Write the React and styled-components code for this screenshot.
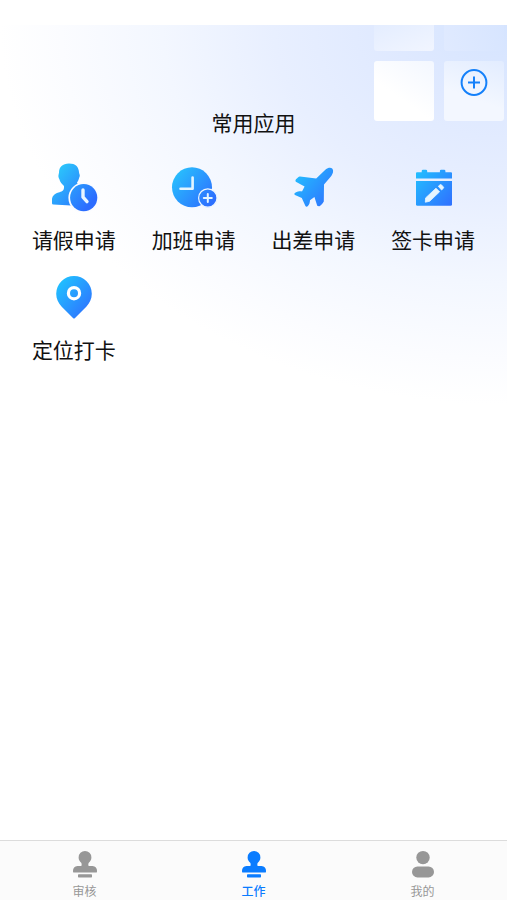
import React from "react";
import styled, { createGlobalStyle } from "styled-components";

const GlobalStyle = createGlobalStyle`
  *, *::before, *::after { box-sizing: border-box; }
  body {
    margin: 0;
    background: #fff;
    color: #111;
    font-family: "Noto Sans CJK SC", sans-serif;
  }
`;

const Page = styled.div`
  display: flex;
  flex-direction: column;
  min-height: 100vh;
  padding-top: 25px;
`;

const Main = styled.main`
  position: relative;
  flex: 1;
  padding: 80px 14px 24px;
  background: radial-gradient(
      ellipse 100% 380px at 100% 0,
      #d5e4ff 0%,
      #dfe9ff 22%,
      #e8efff 46%,
      #f3f7ff 68%,
      #fbfcff 88%,
      #ffffff 100%
    )
    no-repeat;
`;

const Tiles = styled.div`
  position: absolute;
  top: 0;
  right: 3px;
  display: grid;
  grid-template: 26px 60px / 60px 60px;
  gap: 10px;
`;

const tileFills = {
  soft: "linear-gradient(160deg, #e4edff, #f1f5ff)",
  faint: "linear-gradient(70deg, #e0eaff, #d7e5ff)",
  bright: "linear-gradient(215deg, #f3f7ff, #ffffff 60%)",
  pale: "linear-gradient(200deg, #e2ecff, #f3f7ff 60%)",
};

const Tile = styled.span`
  border-radius: ${(p) => (p.$cut ? "0 0 3px 3px" : "3px")};
  background: ${(p) => tileFills[p.$fill]};
`;

const AddButton = styled.button`
  position: absolute;
  top: 43px;
  right: 19px;
  width: 28px;
  height: 28px;
  padding: 0;
  border: 0;
  background: none;
  cursor: pointer;

  svg { display: block; }
`;

const Title = styled.h1`
  margin: 0 0 18px;
  font-size: 21px;
  font-weight: 400;
  line-height: 34px;
  text-align: center;
`;

const AppGrid = styled.nav`
  display: grid;
  grid-template-columns: repeat(4, 1fr);
`;

const AppLink = styled.a`
  display: flex;
  flex-direction: column;
  align-items: center;
  gap: 10px;
  height: 110px;
  padding-top: 5px;
  color: inherit;
  font-size: 21px;
  line-height: 34px;
  text-decoration: none;
  white-space: nowrap;
`;

const TabBar = styled.nav`
  display: grid;
  grid-template-columns: repeat(3, 1fr);
  height: 60px;
  border-top: 1px solid #dcdcdc;
  background: #fbfbfb;
`;

const TabLink = styled.a`
  display: flex;
  flex-direction: column;
  align-items: center;
  gap: 4px;
  padding-top: 9px;
  color: ${(p) => (p.$active ? "#0a7cff" : "#979797")};
  font-size: 12px;
  font-weight: ${(p) => (p.$active ? 500 : 400)};
  line-height: 18px;
  text-decoration: none;
`;

function AppIcon({ id, stops = ["#22c0ff", "#2f74ff"], children }) {
  return (
    <svg width="50" height="50" viewBox="0 0 50 50" aria-hidden="true">
      <defs>
        <linearGradient id={id} gradientUnits="userSpaceOnUse" x1="7" y1="10" x2="43" y2="40">
          <stop offset="0" stopColor={stops[0]} />
          <stop offset="1" stopColor={stops[1]} />
        </linearGradient>
      </defs>
      <g fill={`url(#${id})`}>{children}</g>
    </svg>
  );
}

const LeaveIcon = () => (
  <AppIcon id="leave" stops={["#2bc4fb", "#2c6cff"]}>
    <path d="M20 1.5C13.5 1.5 10 5 10 10.7C9.6 13.2 8.8 14 10.4 17.2C11 20 13 22 15 24V25.5C14.8 29 12.5 29.6 9.5 30.6C5 32 3 34.4 3 38V41.3Q3 42.5 4.3 42.5L22 43.5C25 40 31 24 28 20.5C29.7 18.5 30 16 30.8 14C30.9 12.5 30.2 11.5 30.1 10.7C29.7 4.5 26.5 1.5 20 1.5Z" />
    <circle cx="34.7" cy="35.7" r="15.3" fill="#fbfcff" />
    <circle cx="34.7" cy="35.7" r="13.6" />
    <path d="M34 28V35.2L38 39.6" fill="none" stroke="#e9f6ff" strokeWidth="3.4" strokeLinecap="round" strokeLinejoin="round" />
  </AppIcon>
);

const OvertimeIcon = () => (
  <AppIcon id="overtime" stops={["#28bffd", "#2d70ff"]}>
    <circle cx="23" cy="25.3" r="20" />
    <path d="M11.5 26.8H23.6V15.5" fill="none" stroke="#e3f5ff" strokeWidth="2.6" strokeLinecap="round" strokeLinejoin="round" />
    <circle cx="38.8" cy="36" r="9.2" stroke="#edf6ff" strokeWidth="1.2" />
    <path d="M38.8 32V40M34.8 36H42.8" fill="none" stroke="#e3f5ff" strokeWidth="2" strokeLinecap="round" />
  </AppIcon>
);

const TripIcon = () => (
  <AppIcon id="trip">
    <path d="M37.6 7.5C40 5.6 43 5.3 44.4 6.8C45.8 8.6 45 11.8 43.3 13.9L36 22.4L35.8 39.6C34.8 41.4 33.5 42.7 31.9 43.9C30.7 44.5 29.4 44.2 29 43L26.4 35L22 38.3C21.9 40.5 21.4 42.5 19.9 44.1C19 45 17.9 45 17.3 43.8L13.8 36L7 33C6.1 32.4 6.2 31.4 7.2 30.8C9.5 29.5 11.9 29.2 14 29.4L16.6 24.4L8.3 20C7.2 19.4 7.2 18.3 8 17.3L10.2 15.2Q11 14.5 12 14.6L28.2 16.4Z" />
  </AppIcon>
);

const CardIcon = () => (
  <AppIcon id="card">
    <path d="M9 10.3H13.7V9Q13.7 7.7 15 7.7H17.9Q19.2 7.7 19.2 9V10.3H31.9V9Q31.9 7.7 33.2 7.7H36.1Q37.4 7.7 37.4 9V10.3H43Q44 10.3 44 11.3V16.4H8V11.3Q8 10.3 9 10.3Z" />
    <path d="M8 19H44V42.4Q44 43.8 42.6 43.8H9.4Q8 43.8 8 42.4Z" />
    <path d="M28 26.2L31.6 29.8L21.6 39.3L17.3 40.2L17.6 35.9ZM30.3 24.3L32 22.8Q32.7 22.2 33.4 22.8L35.4 25Q36 25.7 35.4 26.3L33.6 28Z" fill="#e6f5ff" stroke="#e6f5ff" strokeWidth="0.8" strokeLinejoin="round" />
  </AppIcon>
);

const LocateIcon = () => (
  <AppIcon id="locate" stops={["#20c4ff", "#2f70ff"]}>
    <path d="M25 4A17.8 17.8 0 0 1 42.8 21.8C42.8 27 40.6 31.3 37.5 34.5L26 46Q25 47 24 46L12.5 34.5C9.4 31.3 7.2 27 7.2 21.8A17.8 17.8 0 0 1 25 4Z" />
    <circle cx="25" cy="21.2" r="5.6" fill="none" stroke="#fff" strokeWidth="3.2" />
  </AppIcon>
);

const StampIcon = () => (
  <svg width="24" height="28" viewBox="0 0 24 28" fill="currentColor" aria-hidden="true">
    <path d="M12 1A6.4 6.4 0 0 0 5.6 7.4C5.6 9.8 6.8 11.5 8.2 12.7C8.8 13.6 8.8 14.5 8.4 16H4.5Q0 16.5 0 20.8V21.4Q0 22.6 1.2 22.6H22.8Q24 22.6 24 21.4V20.8Q24 16.5 19.5 16H15.6C15.2 14.5 15.2 13.6 15.8 12.7C17.2 11.5 18.4 9.8 18.4 7.4A6.4 6.4 0 0 0 12 1Z" />
    <rect x="5" y="24.2" width="14" height="3.2" rx="0.7" />
  </svg>
);

const PersonIcon = () => (
  <svg width="24" height="28" viewBox="0 0 24 28" fill="currentColor" aria-hidden="true">
    <circle cx="12" cy="7.6" r="6.7" />
    <rect x="1" y="16.4" width="22" height="11" rx="5.5" />
  </svg>
);

const apps = [
  { label: "请假申请", Icon: LeaveIcon },
  { label: "加班申请", Icon: OvertimeIcon },
  { label: "出差申请", Icon: TripIcon },
  { label: "签卡申请", Icon: CardIcon },
  { label: "定位打卡", Icon: LocateIcon },
];

const tabs = [
  { label: "审核", Icon: StampIcon },
  { label: "工作", Icon: StampIcon, active: true },
  { label: "我的", Icon: PersonIcon },
];

export default function App() {
  return (
    <Page>
      <GlobalStyle />
      <Main>
        <Tiles aria-hidden="true">
          <Tile $fill="soft" $cut />
          <Tile $fill="faint" $cut />
          <Tile $fill="bright" />
          <Tile $fill="pale" />
        </Tiles>
        <AddButton type="button" aria-label="添加应用">
          <svg width="28" height="28" viewBox="0 0 28 28" fill="none" stroke="#1480fa" strokeWidth="2" aria-hidden="true">
            <circle cx="14" cy="14.5" r="12.4" />
            <path d="M14 8.5V20.5M8 14.5H20" />
          </svg>
        </AddButton>
        <Title>常用应用</Title>
        <AppGrid aria-label="常用应用">
          {apps.map(({ label, Icon }) => (
            <AppLink key={label} href="#">
              <Icon />
              {label}
            </AppLink>
          ))}
        </AppGrid>
      </Main>
      <TabBar aria-label="主导航">
        {tabs.map(({ label, Icon, active }) => (
          <TabLink key={label} href="#" $active={active} aria-current={active ? "page" : undefined}>
            <Icon />
            {label}
          </TabLink>
        ))}
      </TabBar>
    </Page>
  );
}
